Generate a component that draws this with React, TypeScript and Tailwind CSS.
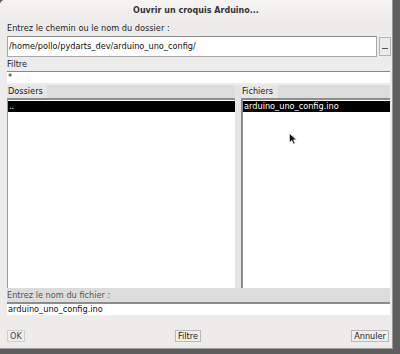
import React from 'react'

const font = { fontFamily: '"DejaVu Sans", "Liberation Sans", sans-serif' }

function Cursor() {
  return (
    <svg className="absolute left-[46px] top-[33px]" width="9" height="12" viewBox="0 0 9 12">
      <path d="M0.5 0.5 L0.5 9.5 L2.8 7.4 L4.5 11 L6 10.3 L4.4 6.8 L7.5 6.8 Z" fill="#111" stroke="#eee" strokeWidth="0.6" />
    </svg>
  )
}

export default function App() {
  return (
    <div className="w-[400px] h-[354px] bg-[#5e5e5e] overflow-hidden text-[8.2px] text-[#222]" style={font}>
      <div className="w-[393px] h-[349px] bg-[#edeceb] rounded-tl-[5px] flex flex-col border-r border-b border-[#9a9a9a]">
        {/* title bar */}
        <div className="h-[22px] flex items-center justify-center font-bold text-[8px] text-[#333] bg-gradient-to-b from-[#f6f5f4] to-[#edeceb] rounded-tl-[5px]">
          Ouvrir un croquis Arduino...
        </div>

        <div className="pl-[7px] pr-[1px] flex flex-col">
          <div className="h-[13px] leading-[13px]">Entrez le chemin ou le nom du dossier :</div>

          <div className="flex items-center gap-[2px] mt-[1px] h-[21px]">
            <div className="flex-1 h-full bg-white border border-[#a9a9a9] border-t-[#8a8a8a] flex items-center pl-[1px] text-[#111]">
              /home/pollo/pydarts_dev/arduino_uno_config/
            </div>
            <div className="w-[12px] h-[19px] bg-[#ecebea] border border-[#b5b5b5] flex items-end justify-center pb-[6px]">
              <div className="w-[6px] h-[1px] bg-[#555]" />
            </div>
          </div>

          <div className="h-[13px] leading-[13px] mt-[1px]">Filtre</div>
          <div className="h-[12px] mr-[1px] bg-white border-t border-[#8a8a8a] flex items-center pl-[1px] text-[#111]">*</div>

          {/* lists */}
          <div className="flex mt-[2px] mr-[1px] h-[203px]">
            <div className="w-[228px] flex flex-col">
              <div className="h-[13px] bg-[#dcdcdc] flex">
                <div className="w-[40px] bg-[#e6e6e6] leading-[13px] pl-[1px]">Dossiers</div>
              </div>
              <div className="flex-1 bg-white border-t-2 border-[#8c8c8c] border-l border-l-[#9a9a9a] pt-[1px]">
                <div className="h-[11px] bg-black text-white leading-[10px] pl-[1px]">..</div>
              </div>
            </div>
            <div className="w-[6px] bg-[#e4e4e4]" />
            <div className="flex-1 flex flex-col">
              <div className="h-[13px] bg-[#dcdcdc] flex">
                <div className="w-[37px] bg-[#e6e6e6] leading-[13px] pl-[1px]">Fichiers</div>
              </div>
              <div className="flex-1 bg-white border-t-2 border-[#8c8c8c] border-l-2 border-l-[#8a8a8a] pt-[1px] relative">
                <div className="h-[11px] bg-black text-white leading-[10px] pl-[1px]">arduino_uno_config.ino</div>
                <Cursor />
              </div>
            </div>
          </div>

          <div className="h-[14px] mr-[1px] bg-[#dcdcdc] leading-[15px] text-[#555]">Entrez le nom du fichier :</div>
          <div className="h-[13px] mr-[1px] bg-white border-t-2 border-[#8c8c8c] flex items-center pl-[1px] text-[#111]">arduino_uno_config.ino</div>

          <div className="flex items-center justify-between mt-[15px] mr-[2px]">
            <div className="h-[12px] px-[2px] bg-[#efeeed] border border-[#cfcfcf] leading-[10px] text-[#444]">OK</div>
            <div className="h-[12px] px-[2px] bg-[#efeeed] border border-[#b9b9b9] leading-[10px]">Filtre</div>
            <div className="h-[12px] px-[2px] bg-[#efeeed] border border-[#b9b9b9] leading-[10px]">Annuler</div>
          </div>
        </div>
      </div>
    </div>
  )
}
